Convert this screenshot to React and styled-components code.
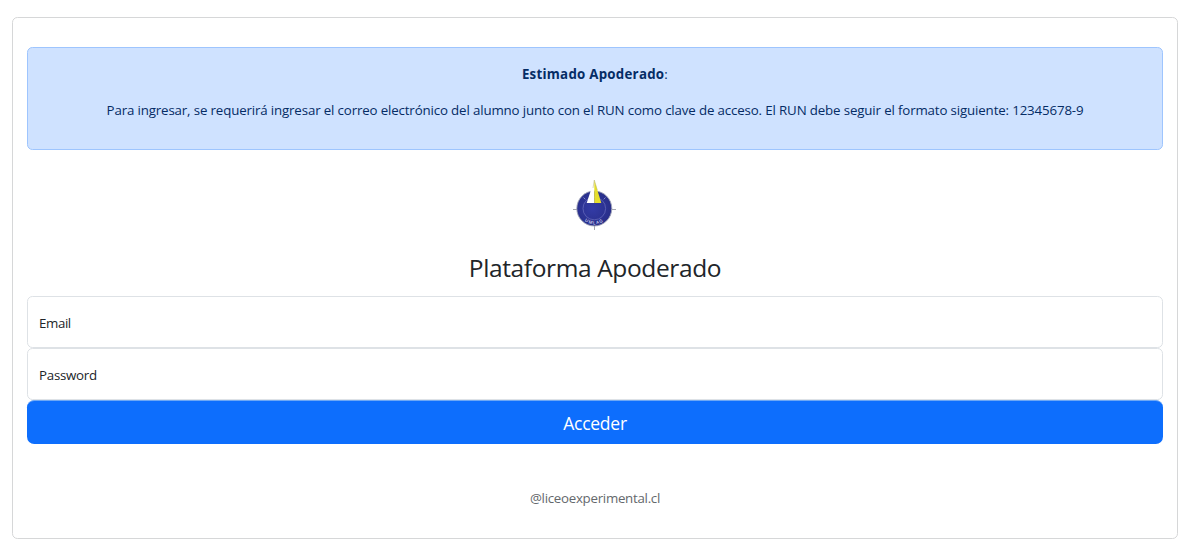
import React from "react";
import styled, { createGlobalStyle } from "styled-components";

const GlobalStyle = createGlobalStyle`
  *, *::before, *::after { box-sizing: border-box; }
  body {
    margin: 0;
    background: #fff;
    color: #212529;
    font-family: "Open Sans", "Noto Sans", sans-serif;
    font-size: 13.3px;
    line-height: 21.6px;
  }
`;

const Page = styled.main`
  padding: 17px 18px 0 12px;
`;

const Card = styled.section`
  height: 522px;
  padding: 29px 14px 0;
  border: 1px solid #d6d7d8;
  border-radius: 5.4px;
  display: flex;
  flex-direction: column;
`;

const Alert = styled.div`
  height: 103px;
  padding: 16px 14px;
  border: 1px solid #9ec5fe;
  border-radius: 5.4px;
  background: #cfe2ff;
  color: #052c65;
  text-align: center;
`;

const AlertText = styled.p`
  margin: 0 0 14.4px;
  white-space: nowrap;
  letter-spacing: ${(p) => p.$spacing || "0"};
`;

const Form = styled.form`
  display: flex;
  flex-direction: column;
  padding-top: 30px;
`;

const Logo = styled.svg`
  width: 44px;
  height: 50px;
  margin-left: 546px;
`;

const Title = styled.h1`
  margin: 21px 0 11px;
  height: 34px;
  line-height: 34px;
  font-size: 24.5px;
  font-weight: 400;
  letter-spacing: -0.37px;
  text-align: center;
`;

const Field = styled.label`
  height: 52px;
  padding: 3px 11px 0;
  border: 1px solid #dee2e6;
  border-radius: 5.4px;
  display: flex;
  align-items: center;
  letter-spacing: ${(p) => p.$spacing || "0"};
`;

const Submit = styled.button`
  height: 44px;
  padding: 2px 0 0;
  border: 0;
  border-top: 1px solid #6ea8f5;
  border-radius: 7.2px;
  background: #0d6efd;
  color: #fff;
  font: inherit;
  font-size: 17.5px;
  letter-spacing: -0.25px;
  line-height: 27px;
`;

const Footer = styled.p`
  margin: 44px 0 0;
  text-align: center;
  color: #64686c;
  letter-spacing: -0.28px;
`;

function CompassLogo() {
  return (
    <Logo viewBox="0 0 44 50" aria-label="Liceo Experimental">
      <defs>
        <radialGradient id="disc" cx="45%" cy="50%" r="55%">
          <stop offset="0" stopColor="#333ba6" />
          <stop offset="1" stopColor="#282e88" />
        </radialGradient>
        <path id="motto" d="M7.2 35.5a15.5 15.5 0 0 0 28 0" />
      </defs>
      <path d="M0 29.5h4M39 29.5h4M21.5 46v4" stroke="#a5a8b0" strokeWidth="1" />
      <circle cx="21.3" cy="28.5" r="17.5" fill="url(#disc)" stroke="#a3a6b8" strokeWidth="0.9" />
      <circle cx="21.3" cy="28.5" r="11.3" fill="none" stroke="#6a6fbe" strokeWidth="0.7" />
      <text fill="#d4d6ee" fontSize="4.4" fontWeight="600" textAnchor="middle" letterSpacing="1">
        <textPath href="#motto" startOffset="50%">UMLAG</textPath>
      </text>
      <path d="M10.5 17.5l1.8 1.8M32.5 17.5l-1.8 1.8" stroke="#8589c4" strokeWidth="1" />
      <path d="M21.3 0L13.7 23h7.6z" fill="#fff" />
      <path d="M21.3 0L28.3 23h-7z" fill="#e6df2c" />
      <path d="M21.3 0L20 8M21.3 0l3 10" stroke="#b5b26c" strokeWidth="0.5" />
    </Logo>
  );
}

export default function App() {
  return (
    <>
      <GlobalStyle />
      <Page>
        <Card>
          <Alert>
            <AlertText $spacing="0.25px"><strong>Estimado Apoderado</strong>:</AlertText>
            <AlertText $spacing="-0.146px">
              Para ingresar, se requerirá ingresar el correo electrónico del alumno junto con el RUN como clave de acceso. El RUN debe seguir el formato siguiente: 12345678-9
            </AlertText>
          </Alert>
          <Form onSubmit={(e) => e.preventDefault()}>
            <CompassLogo />
            <Title>Plataforma Apoderado</Title>
            <Field $spacing="-0.4px">Email</Field>
            <Field $spacing="-0.25px">Password</Field>
            <Submit type="submit">Acceder</Submit>
          </Form>
          <Footer>@liceoexperimental.cl</Footer>
        </Card>
      </Page>
    </>
  );
}
